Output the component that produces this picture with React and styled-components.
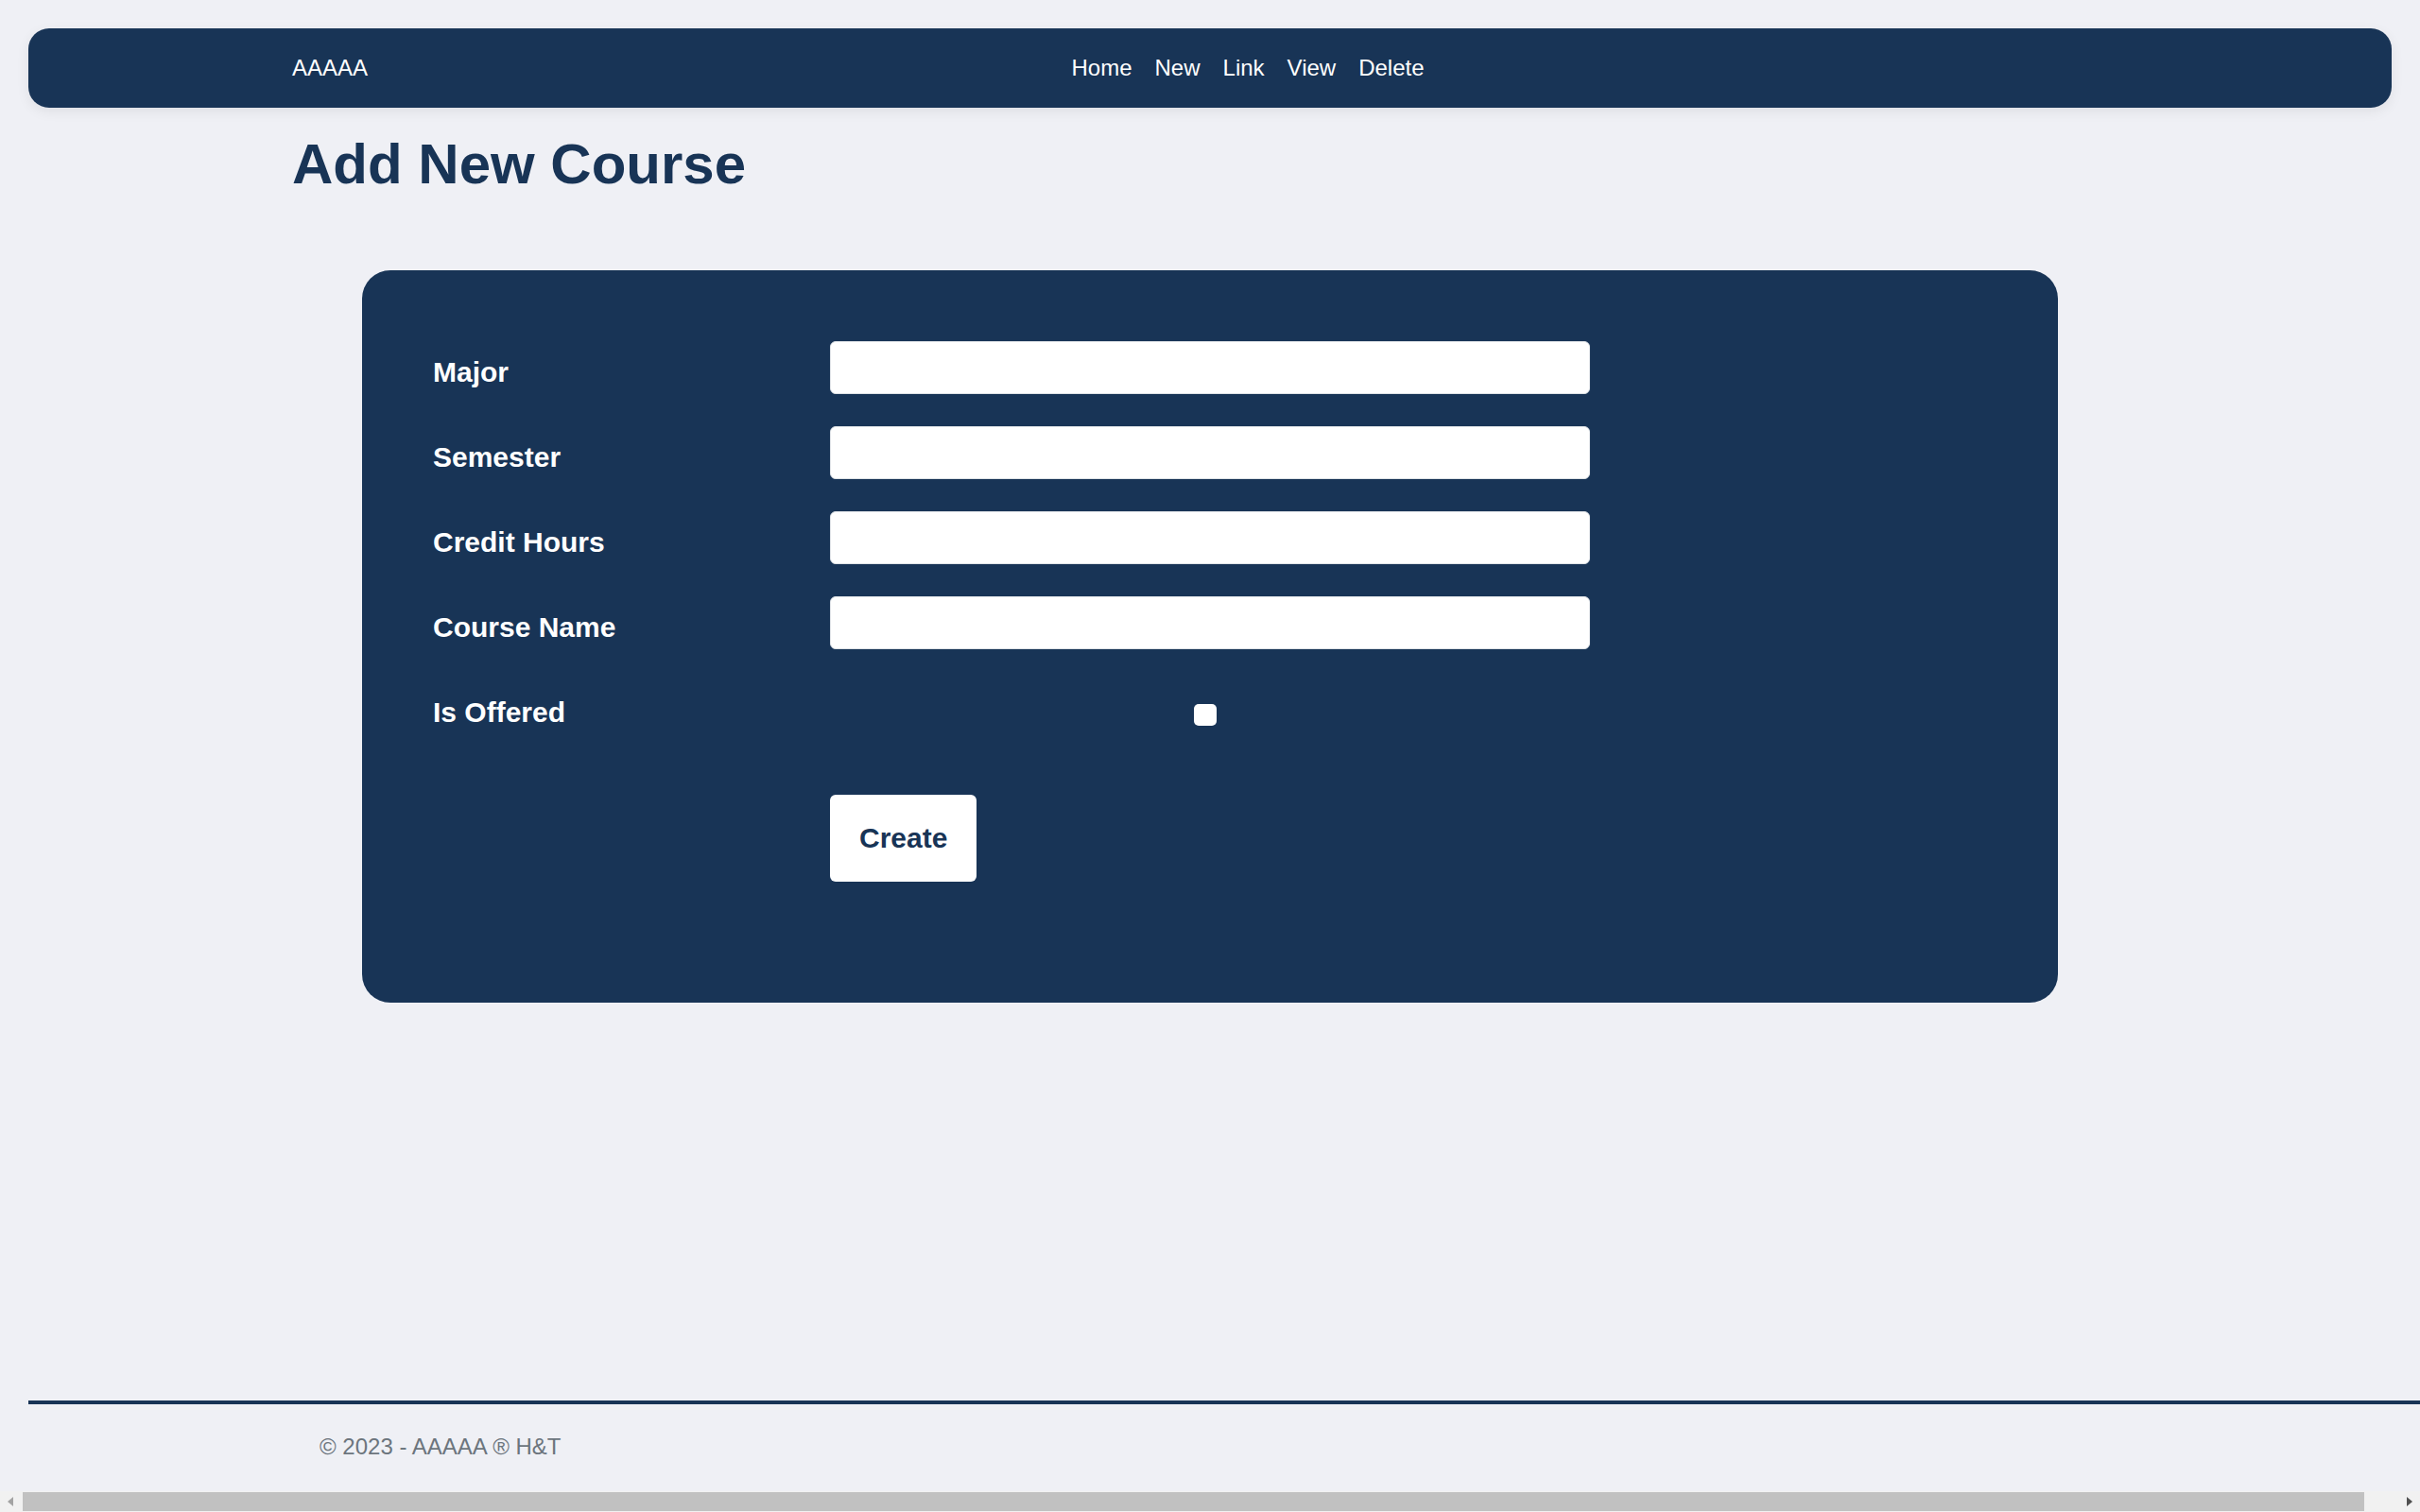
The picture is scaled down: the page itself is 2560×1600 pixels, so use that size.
import React from 'react';
import styled, { createGlobalStyle } from 'styled-components';

const NAVY = '#183456';
const BG = '#eff0f5';

const GlobalStyle = createGlobalStyle`
  html, body {
    margin: 0;
    padding: 0;
    background: ${BG};
    font-family: "Liberation Sans", Arial, sans-serif;
  }
  * {
    box-sizing: border-box;
  }
`;

const Page = styled.div`
  display: flex;
  flex-direction: column;
  min-height: 1578px;
`;

const Navbar = styled.nav`
  margin: 30px 30px 0;
  height: 84px;
  background: ${NAVY};
  border-radius: 22px;
  box-shadow: 0 4px 14px rgba(0, 0, 0, 0.07);
  display: flex;
  align-items: center;
`;

const Container = styled.div`
  width: 1942px;
  margin: 0 auto;
  display: flex;
  align-items: center;
`;

const Brand = styled.a`
  color: #fff;
  font-size: 24px;
  text-decoration: none;
`;

const NavList = styled.ul`
  flex: 1;
  display: flex;
  justify-content: center;
  list-style: none;
  margin: 0;
  padding: 0;
`;

const NavLink = styled.a`
  display: block;
  padding: 0 12px;
  color: #fff;
  font-size: 24px;
  text-decoration: none;
`;

const Main = styled.main`
  width: 1942px;
  margin: 0 auto;
  flex: 1;
`;

const Title = styled.h1`
  margin: 24px 0 0;
  font-size: 60px;
  line-height: 72px;
  font-weight: bold;
  color: ${NAVY};
`;

const Card = styled.form`
  width: 1794px;
  margin: 76px auto 0;
  padding: 75px 75px 128px;
  background: ${NAVY};
  border-radius: 30px;
  display: grid;
  grid-template-columns: 420px 804px;
  row-gap: 34px;
`;

const Label = styled.label`
  padding-top: 16px;
  color: #fff;
  font-size: 30px;
  font-weight: bold;
  line-height: normal;
`;

const Input = styled.input`
  height: 56px;
  width: 100%;
  border: 1px solid #dee2e6;
  border-radius: 6px;
  background: #fff;
  font-size: 24px;
  padding: 0 16px;
`;

const CheckCell = styled.div`
  height: 56px;
  padding: 24px 0 0 385px;
`;

const Checkbox = styled.span`
  display: block;
  width: 24px;
  height: 23px;
  background: #fff;
  border-radius: 5px;
`;

const ButtonCell = styled.div`
  grid-column: 2;
  margin-top: 30px;
`;

const Button = styled.button`
  height: 92px;
  padding: 0 31px;
  background: #fff;
  color: ${NAVY};
  border: none;
  border-radius: 6px;
  font-family: inherit;
  font-size: 30px;
  font-weight: bold;
`;

const Footer = styled.footer`
  margin-left: 30px;
  width: 2560px;
  border-top: 4px solid ${NAVY};
  padding: 31px 0 33px 308px;
  color: #6c757d;
  font-size: 24px;
  line-height: 28px;
`;

const Scrollbar = styled.div`
  position: fixed;
  left: 0;
  right: 0;
  bottom: 0;
  height: 22px;
  background: #f1f1f1;
  display: flex;
  align-items: center;
  padding: 0 8px;
  gap: 10px;
`;

const Arrow = styled.span`
  width: 0;
  height: 0;
  border-top: 5px solid transparent;
  border-bottom: 5px solid transparent;
  ${({ $dir }) =>
    $dir === 'left'
      ? 'border-right: 6px solid #a3a3a3;'
      : 'border-left: 6px solid #505050;'}
`;

const Track = styled.div`
  flex: 1;
  height: 100%;
  display: flex;
  align-items: center;
`;

const Thumb = styled.div`
  width: 98.6%;
  height: 20px;
  background: #c1c1c1;
`;

const fields = ['Major', 'Semester', 'Credit Hours', 'Course Name'];

export default function App() {
  return (
    <>
      <GlobalStyle />
      <Page>
        <Navbar>
          <Container>
            <Brand href="#">AAAAA</Brand>
            <NavList>
              {['Home', 'New', 'Link', 'View', 'Delete'].map((l) => (
                <li key={l}>
                  <NavLink href="#">{l}</NavLink>
                </li>
              ))}
            </NavList>
          </Container>
        </Navbar>
        <Main>
          <Title>Add New Course</Title>
          <Card onSubmit={(e) => e.preventDefault()}>
            {fields.map((f) => (
              <React.Fragment key={f}>
                <Label>{f}</Label>
                <Input type="text" />
              </React.Fragment>
            ))}
            <Label>Is Offered</Label>
            <CheckCell>
              <Checkbox />
            </CheckCell>
            <ButtonCell>
              <Button type="submit">Create</Button>
            </ButtonCell>
          </Card>
        </Main>
        <Footer>© 2023 - AAAAA ® H&amp;T</Footer>
      </Page>
      <Scrollbar>
        <Arrow $dir="left" />
        <Track>
          <Thumb />
        </Track>
        <Arrow $dir="right" />
      </Scrollbar>
    </>
  );
}
